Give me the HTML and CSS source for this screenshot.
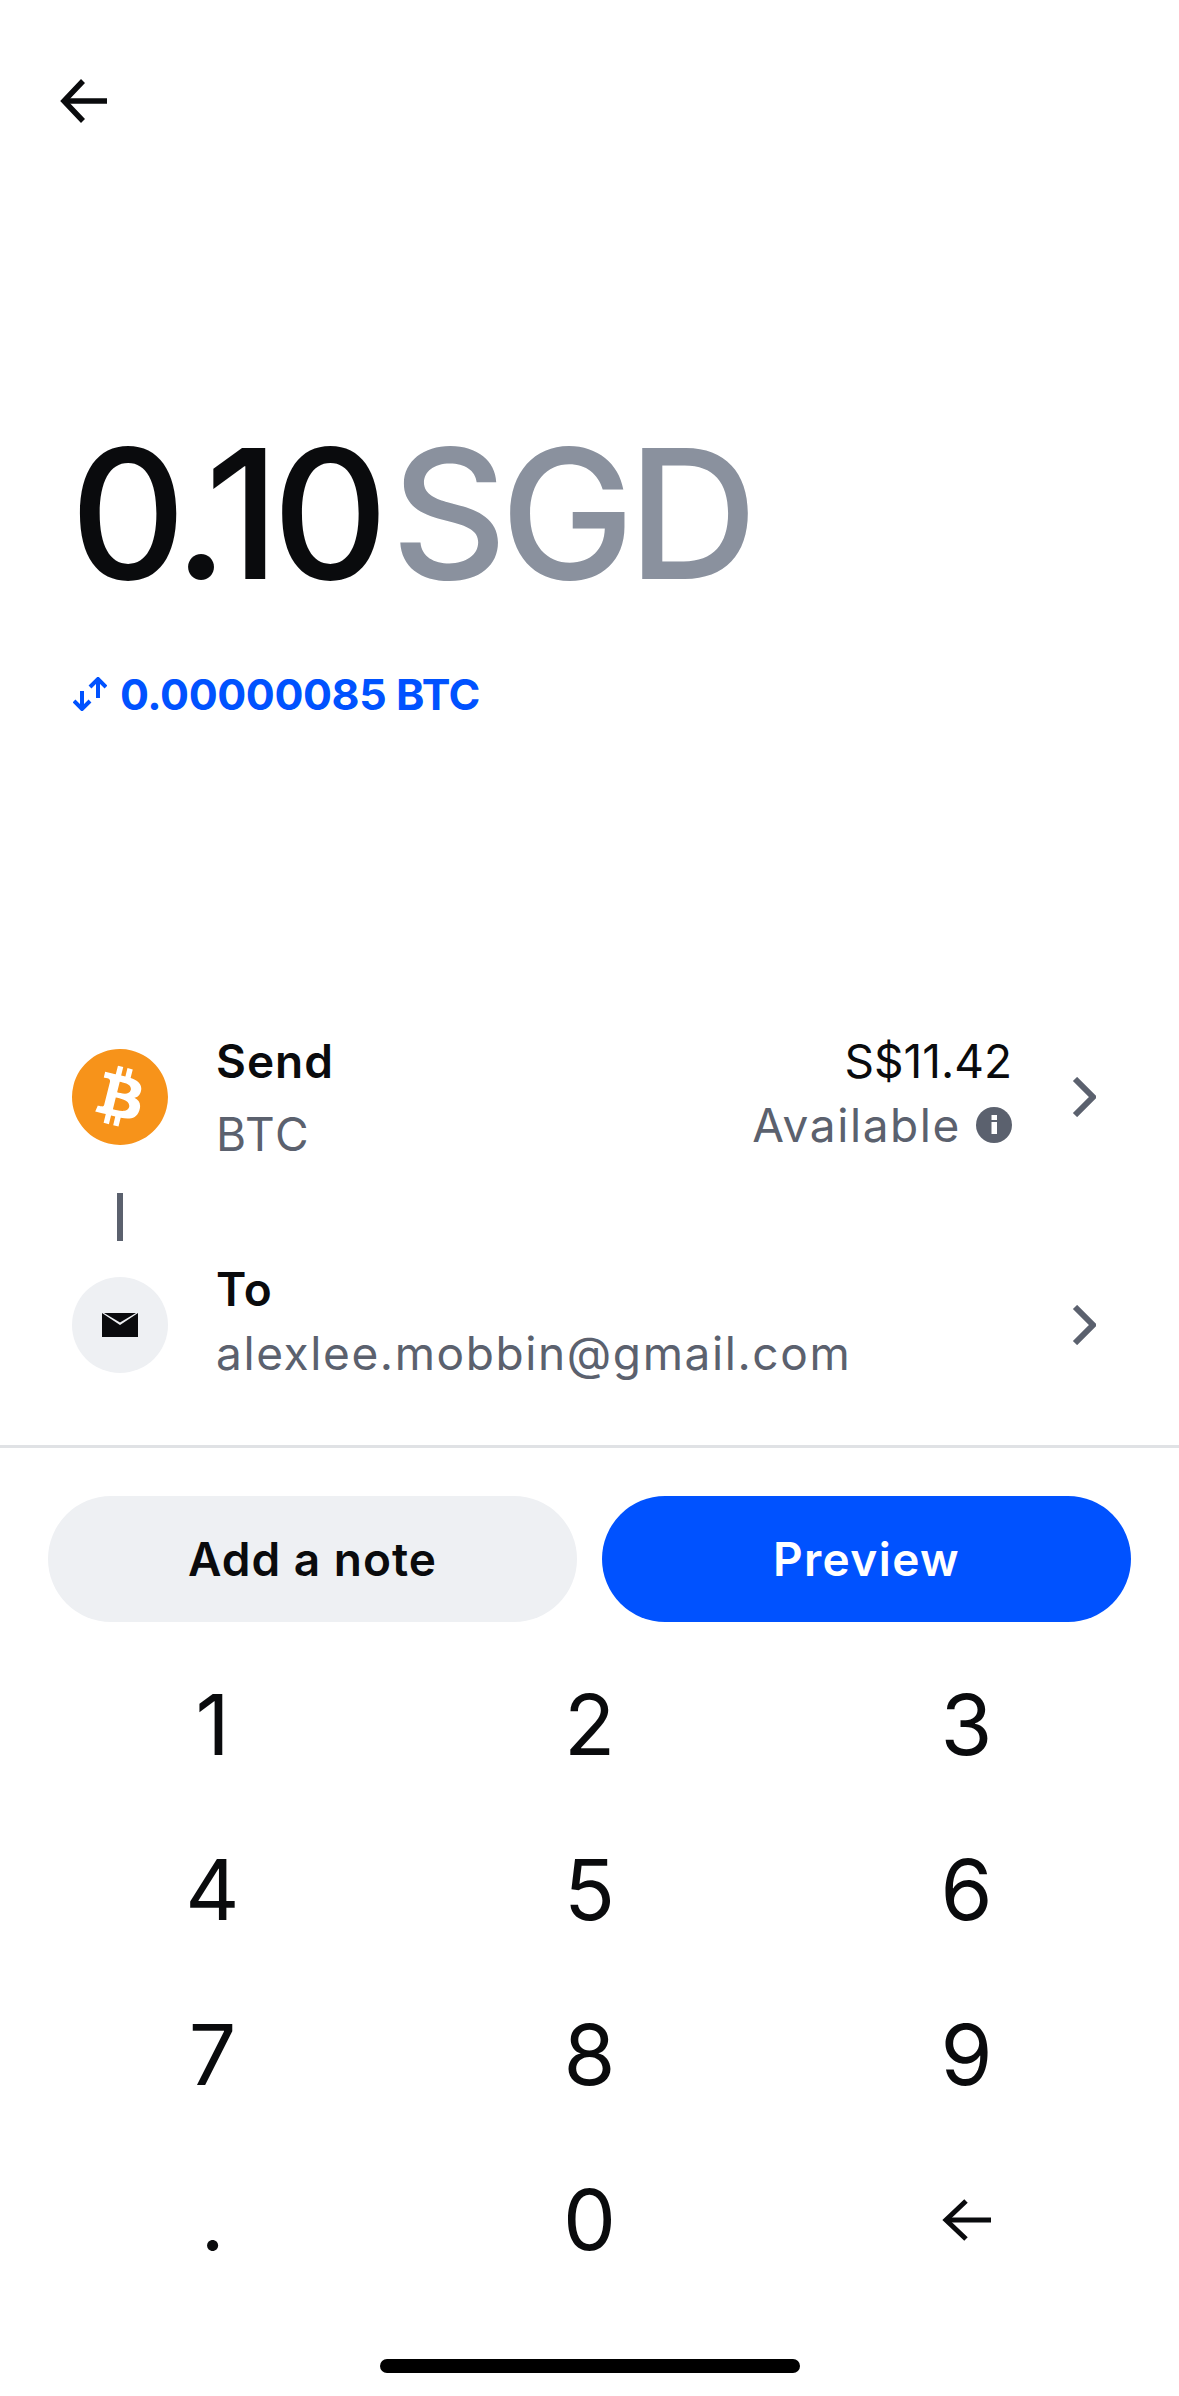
FILE: index.html
```html
<!DOCTYPE html>
<html lang="en">

<head>
    <meta charset="UTF-8">
    <meta name="viewport" content="width=device-width, initial-scale=1.0">
    <title>Send BTC</title>
    <link rel="stylesheet" href="styles.css">
</head>

<body>
    <div class="screen">
        <!-- top bar -->
        <div class="top-bar">
            <svg class="back-icon" width="48" height="44" viewBox="0 0 48 44" fill="none" stroke="#0a0b0d" stroke-width="5.5">
                <path d="M47 22H4"/>
                <path d="M23 2L4 22l19 20"/>
            </svg>
        </div>

        <!-- amount -->
        <div class="amount">
            <span class="amount-value">0.10</span><span class="amount-currency">SGD</span>
        </div>
        <div class="converted">
            <svg width="34" height="34" viewBox="0 0 34 34" fill="none" stroke="#0052ff" stroke-width="4">
                <path d="M9 14V32"/>
                <path d="M1 24l8 8 8-8"/>
                <path d="M25 2V21"/>
                <path d="M17 10l8-8 8 8"/>
            </svg>
            <span>0.00000085 BTC</span>
        </div>

        <!-- send / to -->
        <div class="transfer">
            <div class="row row-send">
                <svg class="coin" width="96" height="96" viewBox="0 0 24 24" fill="#f7931a">
                    <path d="M23.638 14.904c-1.602 6.43-8.113 10.34-14.542 8.736C2.67 22.05-1.244 15.525.362 9.105 1.962 2.67 8.475-1.243 14.9.358c6.43 1.605 10.342 8.115 8.738 14.548v-.002zm-6.35-4.613c.24-1.59-.974-2.45-2.64-3.03l.54-2.153-1.315-.33-.525 2.107c-.345-.087-.705-.167-1.064-.25l.526-2.127-1.32-.33-.54 2.165c-.285-.067-.565-.132-.84-.2l-1.815-.45-.35 1.407s.975.225.955.236c.535.136.63.486.615.766l-1.477 5.92c-.075.166-.24.406-.614.314.015.02-.96-.24-.96-.24l-.66 1.51 1.71.426.93.242-.54 2.19 1.32.327.54-2.17c.36.1.705.19 1.05.273l-.51 2.154 1.32.33.545-2.19c2.24.427 3.93.257 4.64-1.774.57-1.637-.03-2.58-1.217-3.196.854-.193 1.5-.76 1.68-1.93h.01zm-3.01 4.22c-.404 1.64-3.157.75-4.05.53l.72-2.9c.896.23 3.757.67 3.33 2.37zm.41-4.24c-.37 1.49-2.662.735-3.405.55l.654-2.64c.744.18 3.137.524 2.75 2.084v.006z"/>
                </svg>
                <div class="row-text">
                    <div class="row-title">Send</div>
                    <div class="row-sub">BTC</div>
                </div>
                <div class="balance">
                    <div class="balance-value">S$11.42</div>
                    <div class="balance-label">
                        <span>Available</span>
                        <svg width="36" height="36" viewBox="0 0 36 36">
                            <circle cx="18" cy="18" r="18" fill="#5b616e"/>
                            <rect x="15.5" y="15" width="5.5" height="12" fill="#fff"/>
                            <rect x="15.5" y="8" width="5.5" height="5" fill="#fff"/>
                        </svg>
                    </div>
                </div>
                <svg class="chevron" width="24" height="40" viewBox="0 0 24 40" fill="none" stroke="#5b616e" stroke-width="6">
                    <path d="M3 2l18 18L3 38"/>
                </svg>
            </div>

            <div class="connector"></div>

            <div class="row row-to">
                <div class="mail-circle">
                    <svg width="36" height="24" viewBox="0 0 36 24">
                        <path d="M0 0l18 12L36 0v24H0z" fill="#0a0b0d"/>
                        <path d="M2 0h32L18 9.500z" fill="#0a0b0d"/>
                    </svg>
                </div>
                <div class="row-text">
                    <div class="row-title">To</div>
                    <div class="row-sub">alexlee.mobbin@gmail.com</div>
                </div>
                <svg class="chevron" width="24" height="40" viewBox="0 0 24 40" fill="none" stroke="#5b616e" stroke-width="6">
                    <path d="M3 2l18 18L3 38"/>
                </svg>
            </div>
        </div>

        <!-- actions -->
        <div class="actions">
            <button class="btn btn-note">Add a note</button>
            <button class="btn btn-preview">Preview</button>
        </div>

        <!-- keypad -->
        <div class="keypad">
            <div class="key">1</div>
            <div class="key">2</div>
            <div class="key">3</div>
            <div class="key">4</div>
            <div class="key">5</div>
            <div class="key">6</div>
            <div class="key">7</div>
            <div class="key">8</div>
            <div class="key">9</div>
            <div class="key">.</div>
            <div class="key">0</div>
            <div class="key">
                <svg width="50" height="44" viewBox="0 0 50 44" fill="none" stroke="#0a0b0d" stroke-width="5">
                    <path d="M49 22H4"/>
                    <path d="M24 3L4 22l20 19"/>
                </svg>
            </div>
        </div>

        <div class="home-bar"></div>
    </div>
</body>

</html>
```

FILE: styles.css
```css
/* page */
body {
    margin: 0;
    background-color: #fff;
    font-family: Inter, "Liberation Sans", sans-serif;
    color: #0a0b0d;
}

.screen {
    width: 1179px;
    height: 2396px;
    overflow: hidden;
    display: flex;
    flex-direction: column;
}

/* top bar */
.top-bar {
    padding: 79px 0 0 60px;
    height: 44px;
}

.back-icon {
    display: block;
}

/* amount */
.amount {
    margin-top: 281px;
    padding-left: 70px;
    font-size: 180px;
    font-weight: 500;
    line-height: 220px;
    white-space: nowrap;
}

.amount-value {
    letter-spacing: -7.5px;
    margin-right: 10px;
}

.amount-currency {
    letter-spacing: -7px;
    color: #8a919e;
}

.converted {
    margin-top: 50px;
    padding-left: 73px;
    display: flex;
    align-items: center;
    gap: 13px;
    height: 40px;
    font-size: 43px;
    font-weight: 700;
    letter-spacing: -0.4px;
    color: #0052ff;
}

/* send / to */
.transfer {
    margin-top: 311px;
    padding: 0 83px 0 72px;
}

.row {
    display: flex;
    align-items: center;
    height: 144px;
}

.coin {
    flex-shrink: 0;
}

.row-text {
    margin-left: 48px;
    flex: 1;
}

.row-to .row-text {
    margin-top: -9px;
}

.row-title {
    font-size: 46px;
    font-weight: 600;
    line-height: 64px;
    letter-spacing: 1px;
}

.row-sub {
    font-size: 46px;
    line-height: 64px;
    letter-spacing: 1.6px;
    color: #5b616e;
}

.row-send .row-sub {
    margin-top: 9px;
}

.balance {
    text-align: right;
    margin: -8px 60px 0 0;
}

.balance-value {
    font-size: 46px;
    line-height: 64px;
}

.balance-label {
    display: flex;
    align-items: center;
    justify-content: flex-end;
    gap: 15px;
    font-size: 46px;
    line-height: 64px;
    letter-spacing: 1.6px;
    color: #5b616e;
}

.chevron {
    flex-shrink: 0;
}

.connector {
    width: 6px;
    height: 48px;
    margin: 24px 0 12px 45px;
    background-color: #5b616e;
}

.mail-circle {
    width: 96px;
    height: 96px;
    flex-shrink: 0;
    border-radius: 50%;
    background-color: #eef0f3;
    display: flex;
    align-items: center;
    justify-content: center;
}

/* actions */
.actions {
    margin-top: 48px;
    border-top: 3px solid #e0e2e5;
    padding: 48px 48px 0;
    display: flex;
    gap: 25px;
}

.btn {
    flex: 1;
    height: 126px;
    border: none;
    border-radius: 63px;
    font-family: inherit;
    font-size: 46px;
    font-weight: 600;
    letter-spacing: 1px;
}

.btn-note {
    background-color: #eef0f3;
    color: #0a0b0d;
}

.btn-preview {
    background-color: #0052ff;
    color: #fff;
    letter-spacing: 1.4px;
}

/* keypad */
.keypad {
    margin-top: 20px;
    padding: 0 24px;
    display: grid;
    grid-template-columns: repeat(3, 1fr);
    grid-auto-rows: 165px;
}

.key {
    display: flex;
    align-items: center;
    justify-content: center;
    font-size: 84px;
}

/* home indicator */
.home-bar {
    width: 420px;
    height: 14px;
    margin: 57px auto 0;
    border-radius: 7px;
    background-color: #000;
}
```
